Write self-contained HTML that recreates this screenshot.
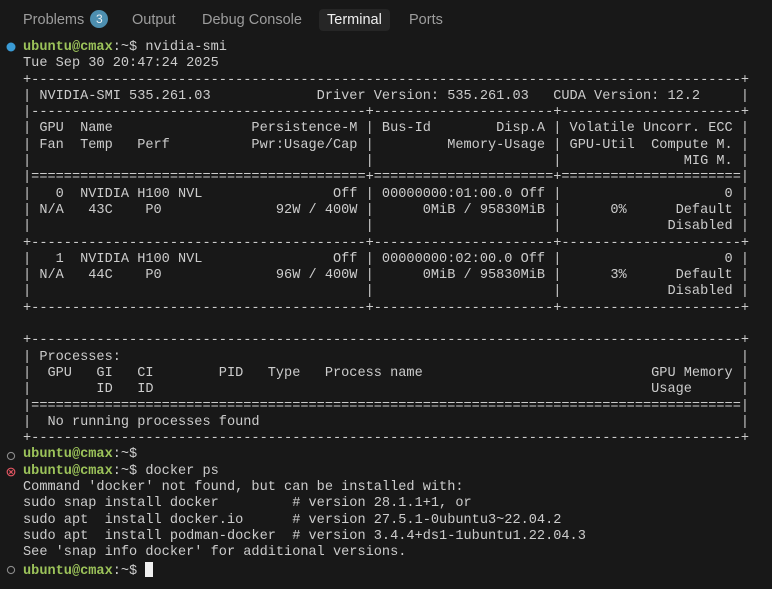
<!DOCTYPE html>
<html><head><meta charset="utf-8"><style>
html,body{margin:0;padding:0;background:#181818;width:772px;height:589px;overflow:hidden}
.tabs{position:absolute;top:0;left:0;height:39px;width:772px;font-family:"Liberation Sans",sans-serif;font-size:14.5px;color:#9d9d9d}
.tab{position:absolute;top:9px;height:22px;line-height:22px}
.badge{display:inline-block;width:18px;height:18px;border-radius:9px;background:#4d8fb0;color:#e8eef2;font-size:12px;line-height:18px;text-align:center;vertical-align:1px;margin-left:2px}
.act{background:#262626;color:#f0f0f0;border-radius:4px;padding:0 8px;left:319px}
pre{position:absolute;left:23px;top:40px;margin:0;font-family:"Liberation Mono",monospace;font-size:13.6px;line-height:16.3px;color:#cccccc}
.g{color:#9cc35a;font-weight:bold}
.cur{display:inline-block;width:8px;height:15px;background:#f0f0f0;vertical-align:-3px}
.ic{position:absolute;left:6px;width:10px;height:10px}
</style></head><body>
<div class="tabs">
<span class="tab" style="left:23px">Problems <span class="badge">3</span></span>
<span class="tab" style="left:132px">Output</span>
<span class="tab" style="left:202px">Debug Console</span>
<span class="tab act">Terminal</span>
<span class="tab" style="left:409px">Ports</span>
</div>
<svg class="ic" style="top:42px" viewBox="0 0 10 10"><circle cx="5" cy="5" r="4.5" fill="#3a9bd5"/></svg>
<svg class="ic" style="top:451px" viewBox="0 0 10 10"><circle cx="5" cy="5" r="3.6" fill="none" stroke="#8a8a8a" stroke-width="1.1"/></svg>
<svg class="ic" style="top:467px" viewBox="0 0 10 10"><circle cx="5" cy="5" r="3.8" fill="none" stroke="#e05561" stroke-width="1.2"/><path d="M3.3 3.3L6.7 6.7M6.7 3.3L3.3 6.7" stroke="#e05561" stroke-width="1.1"/></svg>
<svg class="ic" style="top:565px" viewBox="0 0 10 10"><circle cx="5" cy="5" r="3.6" fill="none" stroke="#8a8a8a" stroke-width="1.1"/></svg>
<pre><span class="g">ubuntu@cmax</span>:~$ nvidia-smi
Tue Sep 30 20:47:24 2025
+---------------------------------------------------------------------------------------+
| NVIDIA-SMI 535.261.03             Driver Version: 535.261.03   CUDA Version: 12.2     |
|-----------------------------------------+----------------------+----------------------+
| GPU  Name                 Persistence-M | Bus-Id        Disp.A | Volatile Uncorr. ECC |
| Fan  Temp   Perf          Pwr:Usage/Cap |         Memory-Usage | GPU-Util  Compute M. |
|                                         |                      |               MIG M. |
|=========================================+======================+======================|
|   0  NVIDIA H100 NVL                Off | 00000000:01:00.0 Off |                    0 |
| N/A   43C    P0              92W / 400W |      0MiB / 95830MiB |      0%      Default |
|                                         |                      |             Disabled |
+-----------------------------------------+----------------------+----------------------+
|   1  NVIDIA H100 NVL                Off | 00000000:02:00.0 Off |                    0 |
| N/A   44C    P0              96W / 400W |      0MiB / 95830MiB |      3%      Default |
|                                         |                      |             Disabled |
+-----------------------------------------+----------------------+----------------------+

+---------------------------------------------------------------------------------------+
| Processes:                                                                            |
|  GPU   GI   CI        PID   Type   Process name                            GPU Memory |
|        ID   ID                                                             Usage      |
|=======================================================================================|
|  No running processes found                                                           |
+---------------------------------------------------------------------------------------+
<span class="g">ubuntu@cmax</span>:~$
<span class="g">ubuntu@cmax</span>:~$ docker ps
Command 'docker' not found, but can be installed with:
sudo snap install docker         # version 28.1.1+1, or
sudo apt  install docker.io      # version 27.5.1-0ubuntu3~22.04.2
sudo apt  install podman-docker  # version 3.4.4+ds1-1ubuntu1.22.04.3
See 'snap info docker' for additional versions.
<span class="g">ubuntu@cmax</span>:~$ <span class="cur"></span></pre>
</body></html>
